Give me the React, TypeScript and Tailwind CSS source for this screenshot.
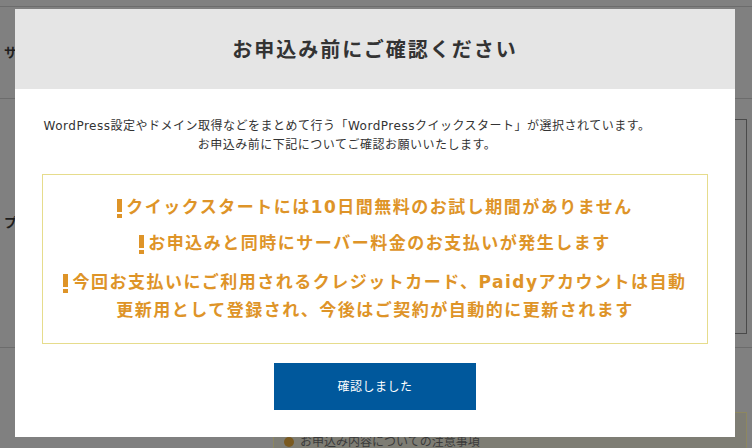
import React from "react";

const font = { fontFamily: '"DejaVu Sans", "Noto Sans CJK JP", sans-serif' };

function Bang() {
  return (
    <span className="mr-[4px] inline-flex flex-col items-center gap-[2px] align-[1px]">
      <span className="block h-[13px] w-[5px] bg-[#de9428]" />
      <span className="block h-[4px] w-[5px] bg-[#de9428]" />
    </span>
  );
}

export default function App() {
  return (
    <div className="relative h-[448px] w-[752px] overflow-hidden bg-[#808080]" style={font}>
      {/* dimmed page behind the dialog */}
      <div className="pt-[6px]">
        <div className="flex h-[93px] items-center border-y border-[#6c6c6c] pl-[4px]">
          <span className="text-[13px] font-bold text-[#1e1e1e]">サ</span>
        </div>
        <div className="flex h-[249px] items-center border-b border-[#6c6c6c] pl-[4px]">
          <span className="text-[13px] font-bold text-[#1e1e1e]">プ</span>
          <div className="ml-auto mr-[5px] mt-[6px] h-[215px] w-[400px] border border-[#4a4a4a]" />
        </div>
        <div className="pl-[273px] pr-[5px] pt-[64px]">
          <div className="h-[60px] border border-[#8d8760] bg-[#7e7d74] px-[10px] pt-[20px]">
            <div className="flex items-center gap-[6px]">
              <span className="h-[10px] w-[10px] rounded-full bg-[#7a5a20]" />
              <span className="text-[12px] text-[#3a3a3a]">お申込み内容についての注意事項</span>
            </div>
          </div>
        </div>
      </div>

      {/* dialog */}
      <div className="absolute left-[15px] top-[9px] flex h-[428px] w-[720px] flex-col bg-white">
        <div className="flex h-[80px] items-center justify-center bg-[#e5e5e5]">
          <h2 className="text-[20px] font-bold tracking-[2px] text-[#333]" style={{ fontFamily: '"Noto Sans CJK JP", sans-serif' }}>
            お申込み前にご確認ください
          </h2>
        </div>
        <div className="flex flex-col items-center px-[27px] pt-[28px]">
          <p className="pr-[56px] text-center text-[12px] leading-[19px] tracking-[0.5px] text-[#333]">
            WordPress設定やドメイン取得などをまとめて行う「WordPressクイックスタート」が選択されています。
            <br />
            お申込み前に下記についてご確認お願いいたします。
          </p>
          <div className="mt-[19px] w-full border border-[#e6dc8c] pb-[19px] pt-[18px] text-center text-[17px] font-bold leading-[28px] tracking-[1.5px] text-[#de9428]">
            <p>
              <Bang />
              クイックスタートには10日間無料のお試し期間がありません
            </p>
            <p className="mt-[8px]">
              <Bang />
              お申込みと同時にサーバー料金のお支払いが発生します
            </p>
            <p className="mt-[11px]">
              <Bang />
              今回お支払いにご利用されるクレジットカード、Paidyアカウントは自動
              <br />
              更新用として登録され、今後はご契約が自動的に更新されます
            </p>
          </div>
          <button
            type="button"
            className="mt-[19px] h-[47px] w-[202px] bg-[#00589c] text-[12px] tracking-[0.5px] text-white"
          >
            確認しました
          </button>
        </div>
      </div>
    </div>
  );
}
